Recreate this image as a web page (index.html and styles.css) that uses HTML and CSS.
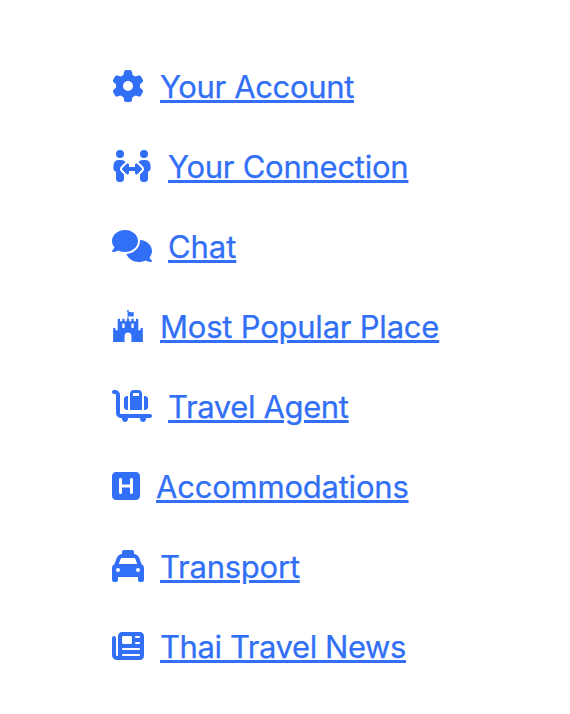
FILE: index.html
```html
<!DOCTYPE html>
<html lang="en">
<head>
<meta charset="utf-8">
<title>Menu</title>
<link rel="stylesheet" href="styles.css">
</head>
<body>
<nav class="menu">
  <div class="item">
    <svg class="icon" viewBox="0 0 512 512"><path d="M495.9 166.6c3.2 8.7 .5 18.4-6.4 24.6l-43.3 39.4c1.1 8.3 1.7 16.8 1.7 25.4s-.6 17.1-1.7 25.4l43.3 39.4c6.9 6.2 9.6 15.9 6.4 24.6c-4.4 11.9-9.7 23.3-15.8 34.3l-4.7 8.1c-6.6 11-14 21.4-22.1 31.2c-5.9 7.2-15.7 9.6-24.5 6.8l-55.7-17.7c-13.4 10.3-28.2 18.9-44 25.4l-12.5 57.1c-2 9.1-9 16.3-18.2 17.8c-13.8 2.3-28 3.5-42.5 3.5s-28.7-1.2-42.5-3.5c-9.2-1.5-16.2-8.7-18.2-17.8l-12.5-57.1c-15.8-6.5-30.6-15.1-44-25.4L83.1 425.9c-8.8 2.8-18.6 .3-24.5-6.8c-8.1-9.8-15.5-20.2-22.1-31.2l-4.7-8.1c-6.1-11-11.4-22.4-15.8-34.3c-3.2-8.7-.5-18.4 6.4-24.6l43.3-39.4C64.6 273.1 64 264.6 64 256s.6-17.1 1.7-25.4L22.4 191.2c-6.9-6.2-9.6-15.9-6.4-24.6c4.4-11.9 9.7-23.3 15.8-34.3l4.7-8.1c6.6-11 14-21.4 22.1-31.2c5.9-7.2 15.7-9.6 24.5-6.8l55.7 17.7c13.4-10.3 28.2-18.9 44-25.4l12.5-57.1c2-9.1 9-16.3 18.2-17.8C227.3 1.2 241.5 0 256 0s28.7 1.2 42.5 3.5c9.2 1.5 16.2 8.7 18.2 17.8l12.5 57.1c15.8 6.5 30.6 15.1 44 25.4l55.7-17.7c8.8-2.8 18.6-.3 24.5 6.8c8.1 9.8 15.5 20.2 22.1 31.2l4.7 8.1c6.1 11 11.4 22.4 15.8 34.3zM256 336a80 80 0 1 0 0-160 80 80 0 1 0 0 160z"/></svg>
    <a class="link account" href="#">Your Account</a>
  </div>
  <div class="item">
    <svg class="icon wide" viewBox="0 0 640 512"><path d="M64 64a64 64 0 1 1 128 0A64 64 0 1 1 64 64zM25.9 233.4C29.3 191.9 64 160 105.6 160h44.8c27 0 51 13.4 65.5 34.1c-2.7 1.9-5.2 4-7.5 6.3l-64 64c-21.9 21.9-21.9 57.3 0 79.2L192 391.2V464c0 26.5-21.5 48-48 48H112c-26.5 0-48-21.5-48-48V348.3c-26.5-9.5-44.7-35.8-42.2-65.6l4.1-49.3zM448 64a64 64 0 1 1 128 0A64 64 0 1 1 448 64zM431.6 200.4c-2.3-2.3-4.9-4.4-7.5-6.3c14.5-20.7 38.6-34.1 65.5-34.1h44.8c41.6 0 76.3 31.9 79.7 73.4l4.1 49.3c2.5 29.8-15.7 56.1-42.2 65.6V464c0 26.5-21.5 48-48 48H496c-26.5 0-48-21.5-48-48V391.2l47.6-47.6c21.9-21.9 21.9-57.3 0-79.2l-64-64zM272 240v32h96V240c0-9.7 5.8-18.5 14.8-22.2s19.3-1.7 26.2 5.2l64 64c9.4 9.4 9.4 24.6 0 33.9l-64 64c-6.9 6.9-17.2 8.9-26.2 5.2s-14.8-12.5-14.8-22.2V336H272v32c0 9.7-5.8 18.5-14.8 22.2s-19.3 1.7-26.2-5.2l-64-64c-9.4-9.4-9.4-24.6 0-33.9l64-64c6.9-6.9 17.2-8.9 26.2-5.2s14.8 12.5 14.8 22.2z"/></svg>
    <a class="link connection" href="#">Your Connection</a>
  </div>
  <div class="item">
    <svg class="icon wide" viewBox="0 0 640 512"><path d="M208 352c114.9 0 208-78.8 208-176S322.9 0 208 0S0 78.8 0 176c0 38.6 14.7 74.3 39.6 103.4c-3.5 9.4-8.7 17.7-14.2 24.7c-4.8 6.2-9.7 11-13.3 14.3c-1.8 1.6-3.3 2.9-4.3 3.7c-.5 .4-.9 .7-1.1 .8l-.2 .2C1 327.2-1.4 334.4 .8 340.9S9.1 352 16 352c21.8 0 43.8-5.6 62.1-12.5c9.2-3.5 17.8-7.4 25.2-11.4C134.1 343.3 169.8 352 208 352zM448 176c0 112.3-99.1 196.9-216.5 207C255.8 457.4 336.4 512 432 512c38.2 0 73.9-8.7 104.7-23.9c7.5 4 16 7.9 25.2 11.4c18.3 6.9 40.3 12.5 62.1 12.5c6.9 0 13.1-4.5 15.2-11.1c2.1-6.6-.2-13.8-5.8-17.9l-.2-.2c-.2-.2-.6-.4-1.1-.8c-1-.8-2.5-2-4.3-3.7c-3.6-3.3-8.5-8.1-13.3-14.3c-5.5-7-10.7-15.4-14.2-24.7c24.9-29 39.6-64.7 39.6-103.4c0-92.8-84.9-168.9-192.6-175.5c.4 5.1 .6 10.3 .6 15.5z"/></svg>
    <a class="link chat" href="#">Chat</a>
  </div>
  <div class="item">
    <svg class="icon" viewBox="0 0 512 512"><path d="M489.2 287.9h-27.4c-2.6 0-4.6 2-4.6 4.6v32h-36.6V146.2c0-2.6-2-4.6-4.6-4.6h-27.4c-2.6 0-4.6 2-4.6 4.6v32h-36.6v-32c0-2.6-2-4.6-4.6-4.6h-27.4c-2.6 0-4.6 2-4.6 4.6v32h-36.6v-32c0-6-8-4.6-11.7-4.6v-38c8.3-2 17.1-3.4 25.7-3.4 10.9 0 20.9 4.3 31.4 4.3 4.6 0 27.7-1.1 27.7-8v-60c0-2.6-2-4.6-4.6-4.6-5.1 0-15.1 4.3-24 4.3-9.7 0-20.9-4.3-32.6-4.3-8 0-16 1.1-23.7 2.9v-4.9c5.4-2.6 9.1-8.3 9.1-14.3 0-20.7-31.4-20.8-31.4 0 0 6 3.7 11.7 9.1 14.3v111.7c-3.7 0-11.7-1.4-11.7 4.6v32h-36.6v-32c0-2.6-2-4.6-4.6-4.6h-27.4c-2.6 0-4.6 2-4.6 4.6v32H128v-32c0-2.6-2-4.6-4.6-4.6H96c-2.6 0-4.6 2-4.6 4.6v178.3H54.8v-32c0-2.6-2-4.6-4.6-4.6H22.8c-2.6 0-4.6 2-4.6 4.6V512h182.9v-96c0-72.6 109.7-72.6 109.7 0v96h182.9V292.5c.1-2.6-1.9-4.6-4.5-4.6zm-288.1-4.5c0 2.6-2 4.6-4.6 4.6h-27.4c-2.6 0-4.6-2-4.6-4.6v-64c0-2.6 2-4.6 4.6-4.6h27.4c2.6 0 4.6 2 4.6 4.6v64zm146.4 0c0 2.6-2 4.6-4.6 4.6h-27.4c-2.6 0-4.6-2-4.6-4.6v-64c0-2.6 2-4.6 4.6-4.6h27.4c2.6 0 4.6 2 4.6 4.6v64z"/></svg>
    <a class="link popular" href="#">Most Popular Place</a>
  </div>
  <div class="item">
    <svg class="icon wide" viewBox="0 0 640 512"><path d="M0 32C0 14.3 14.3 0 32 0H48c44.2 0 80 35.8 80 80V368c0 8.8 7.2 16 16 16H608c17.7 0 32 14.3 32 32s-14.3 32-32 32H541.3c1.8 5 2.7 10.4 2.7 16c0 26.5-21.5 48-48 48s-48-21.5-48-48c0-5.6 1-11 2.7-16H253.3c1.8 5 2.7 10.4 2.7 16c0 26.5-21.5 48-48 48s-48-21.5-48-48c0-5.6 1-11 2.7-16H144c-44.2 0-80-35.8-80-80V80c0-8.8-7.2-16-16-16H32C14.3 64 0 49.7 0 32zM432 96V56c0-4.4-3.6-8-8-8H344c-4.4 0-8 3.6-8 8V96h96zM288 96V56c0-30.9 25.1-56 56-56h80c30.9 0 56 25.1 56 56V96 320H288V96zM512 320V96h16c26.5 0 48 21.5 48 48V272c0 26.5-21.5 48-48 48H512zM240 96h16V320H240c-26.5 0-48-21.5-48-48V144c0-26.5 21.5-48 48-48z"/></svg>
    <a class="link agent" href="#">Travel Agent</a>
  </div>
  <div class="item">
    <svg class="icon narrow" viewBox="0 0 448 512"><path d="M64 32C28.7 32 0 60.7 0 96V416c0 35.3 28.7 64 64 64H384c35.3 0 64-28.7 64-64V96c0-35.3-28.7-64-64-64H64zM336 152V256 360c0 13.3-10.7 24-24 24s-24-10.7-24-24V280H160l0 80c0 13.3-10.7 24-24 24s-24-10.7-24-24l0-208c0-13.3 10.7-24 24-24s24 10.7 24 24v80H288V152c0-13.3 10.7-24 24-24s24 10.7 24 24z"/></svg>
    <a class="link accommodations" href="#">Accommodations</a>
  </div>
  <div class="item">
    <svg class="icon" viewBox="0 0 512 512"><path d="M192 0c-17.7 0-32 14.3-32 32V64v.2c-38.6 2.2-72.3 27.3-85.2 64.1L39.6 228.8C16.4 238.4 0 261.3 0 288V432v48c0 17.7 14.3 32 32 32H64c17.7 0 32-14.3 32-32V432H416v48c0 17.7 14.3 32 32 32h32c17.7 0 32-14.3 32-32V432 288c0-26.7-16.4-49.6-39.6-59.2L437.2 128.3c-12.9-36.8-46.6-62-85.2-64.1V64 32c0-17.7-14.3-32-32-32H192zM165.4 128H346.6c13.6 0 25.7 8.6 30.2 21.4L402.9 224H109.1l26.1-74.6c4.5-12.8 16.6-21.4 30.2-21.4zM96 288a32 32 0 1 1 0 64 32 32 0 1 1 0-64zm288 32a32 32 0 1 1 64 0 32 32 0 1 1-64 0z"/></svg>
    <a class="link transport" href="#">Transport</a>
  </div>
  <div class="item">
    <svg class="icon" viewBox="0 0 512 512"><path d="M96 96c0-35.3 28.7-64 64-64H448c35.3 0 64 28.7 64 64V416c0 35.3-28.7 64-64 64H80c-44.2 0-80-35.8-80-80V128c0-17.7 14.3-32 32-32s32 14.3 32 32V400c0 8.8 7.2 16 16 16s16-7.2 16-16V96zm64 24v80c0 13.3 10.7 24 24 24H296c13.3 0 24-10.7 24-24V120c0-13.3-10.7-24-24-24H184c-13.3 0-24 10.7-24 24zm208-8c0 8.8 7.2 16 16 16h48c8.8 0 16-7.2 16-16s-7.2-16-16-16H384c-8.8 0-16 7.2-16 16zm0 96c0 8.8 7.2 16 16 16h48c8.8 0 16-7.2 16-16s-7.2-16-16-16H384c-8.8 0-16 7.2-16 16zM160 304c0 8.8 7.2 16 16 16H432c8.8 0 16-7.2 16-16s-7.2-16-16-16H176c-8.8 0-16 7.2-16 16zm0 96c0 8.8 7.2 16 16 16H432c8.8 0 16-7.2 16-16s-7.2-16-16-16H176c-8.8 0-16 7.2-16 16z"/></svg>
    <a class="link news" href="#">Thai Travel News</a>
  </div>
</nav>
</body>
</html>
```
FILE: styles.css
```css
body {
  margin: 0;
  background: #fff;
  font-family: Inter, sans-serif;
}

.menu {
  display: flex;
  flex-direction: column;
  gap: 32px;
  padding: 62px 0 0 112px;
  color: #316ff6;
}

.item {
  display: flex;
  align-items: center;
  gap: 16px;
  height: 48px;
}

.icon {
  flex: none;
  width: 32px;
  height: 32px;
  fill: currentColor;
}

.wide {
  width: 40px;
}

.narrow {
  width: 28px;
}

.link {
  padding-top: 2px;
  color: inherit;
  font-size: 31px;
  line-height: 48px;
  white-space: nowrap;
  text-decoration: underline;
  text-decoration-thickness: 3px;
  text-underline-offset: 2px;
  -webkit-text-stroke: 0.25px currentColor;
}

.account { letter-spacing: -0.35px; }
.connection { letter-spacing: -0.25px; }
.chat { letter-spacing: -0.07px; }
.popular { letter-spacing: -0.22px; }
.agent { letter-spacing: -0.36px; }
.accommodations { letter-spacing: -0.22px; }
.transport { letter-spacing: -0.23px; }
.news { letter-spacing: -0.41px; }
```
